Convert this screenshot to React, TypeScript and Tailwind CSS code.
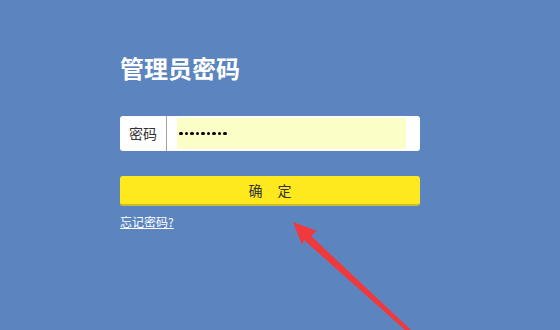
export default function App() {
  const dots = Array.from({ length: 9 });

  return (
    <div
      className="relative w-[560px] h-[330px] overflow-hidden bg-[#5c85c0]"
      style={{ fontFamily: '"Microsoft YaHei", "Noto Sans CJK SC", "Noto Sans", sans-serif' }}
    >
      <div className="ml-[120px] w-[300px] pt-[50px] flex flex-col">
        <h1 className="text-[24px] leading-[36px] font-bold text-white">管理员密码</h1>

        <div className="mt-[30px] h-[35px] bg-white rounded-[3px] flex items-center">
          <div className="w-[46px] h-full flex items-center justify-center text-[14px] text-[#333]">
            密码
          </div>
          <div className="w-px h-full bg-[#9aa3b0]" />
          <div className="flex-1 h-full py-[2px] pl-[10px] pr-[14px] flex">
            <div className="flex-1 bg-[#fbfec6] flex items-center gap-[2px] pl-[2px]">
              {dots.map((_, i) => (
                <span key={i} className="w-[3.5px] h-[3.5px] rounded-full bg-black" />
              ))}
            </div>
          </div>
        </div>

        <button className="mt-[25px] h-[30px] bg-[#fde91e] rounded-[3px] border-b-2 border-[#c9bb2a] text-[14px] text-[#333] flex items-center justify-center">
          <span>确</span>
          <span className="ml-[15px]">定</span>
        </button>

        <a className="mt-[8px] text-[12px] leading-[16px] text-white underline self-start">忘记密码?</a>
      </div>

      <svg className="absolute left-0 top-0" width="560" height="330" viewBox="0 0 560 330">
        <polygon
          points="293,222 317,231 311,236 411,330 405,330 304,240 302,245"
          fill="#f0393c"
        />
      </svg>
    </div>
  );
}
